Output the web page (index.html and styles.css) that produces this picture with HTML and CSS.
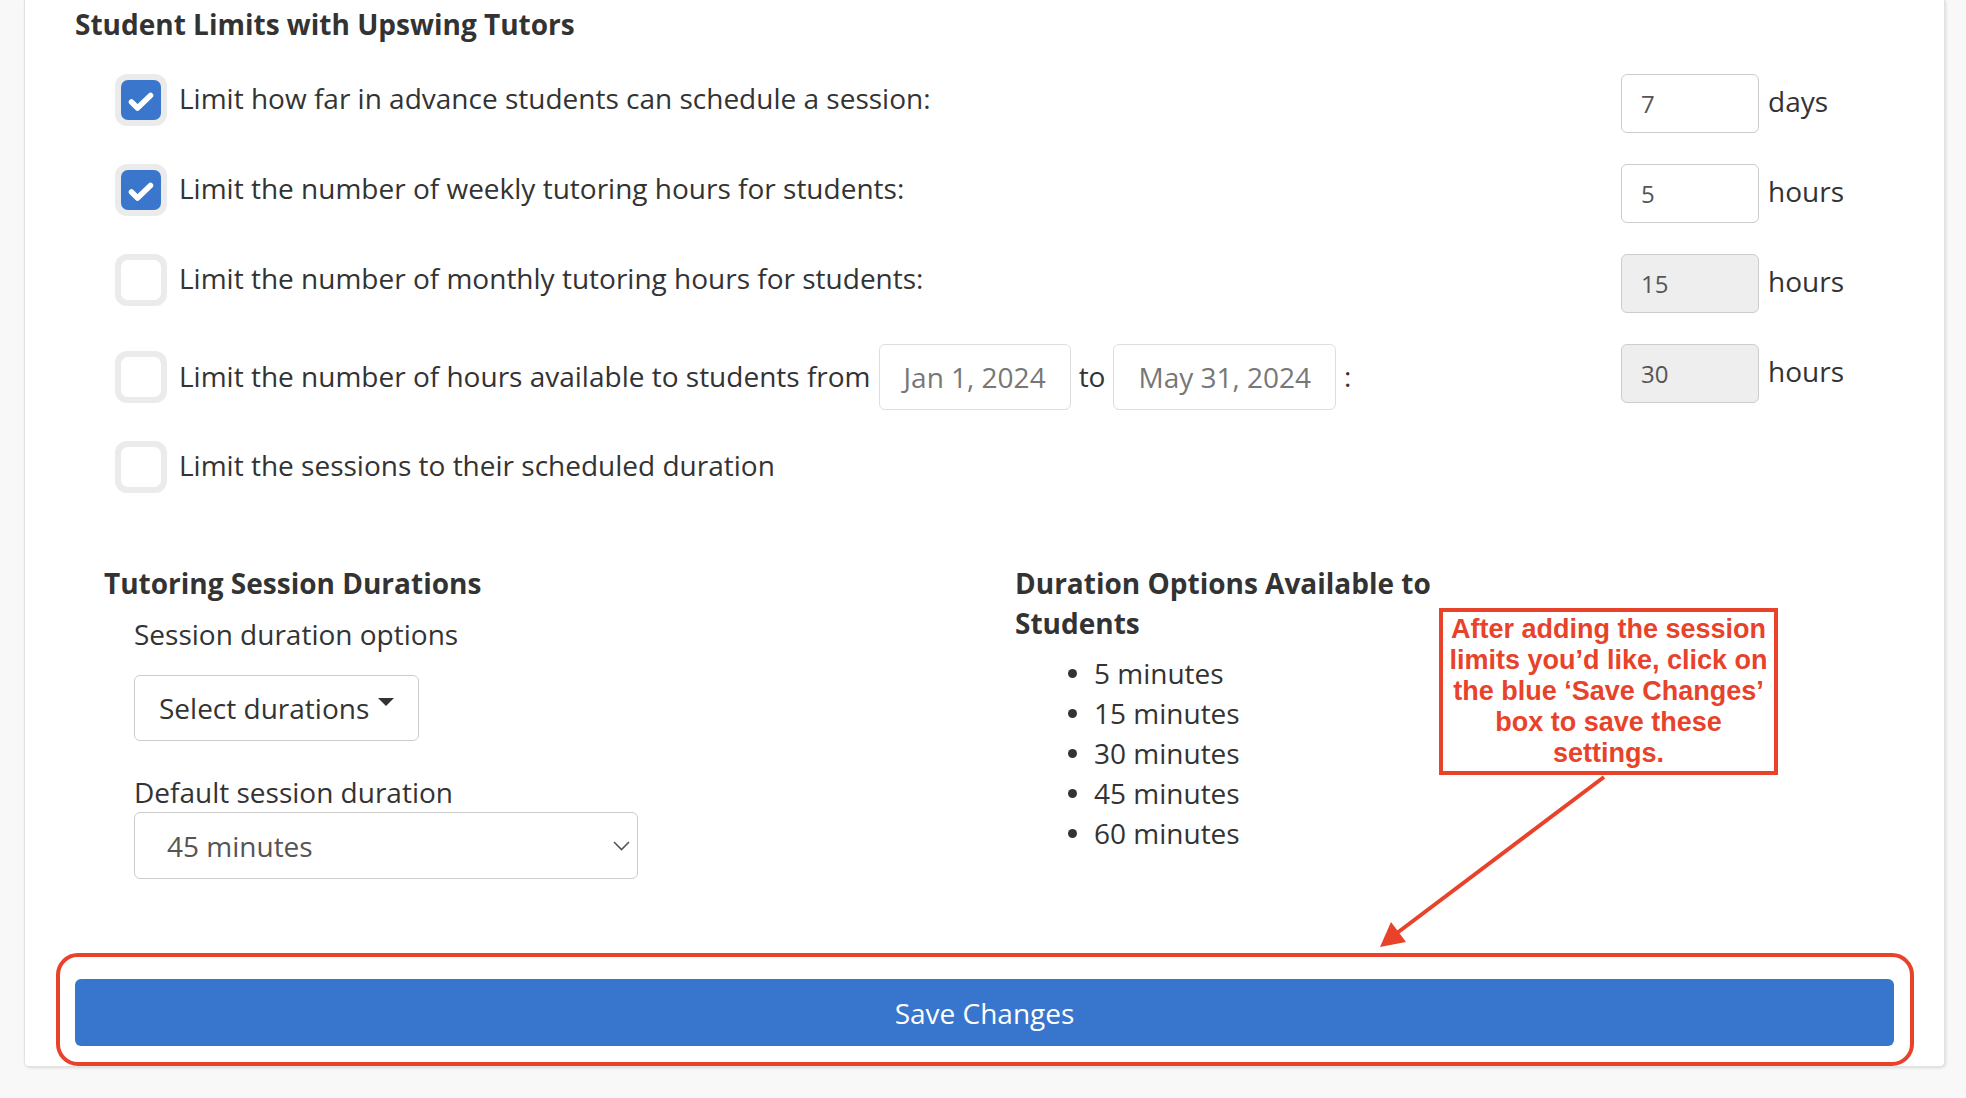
FILE: index.html
```html
<!DOCTYPE html>
<html lang="en">
<head>
<meta charset="utf-8">
<title>Student Limits with Upswing Tutors</title>
<link rel="stylesheet" href="styles.css">
</head>
<body>
<div class="page">
  <div class="card">
    <h2 class="section-title">Student Limits with Upswing Tutors</h2>

    <div class="limits">
      <div class="limit-row">
        <div class="limit-main">
          <span class="check is-checked"><span class="check-box"><svg width="40" height="40" viewBox="0 0 40 40"><path d="M10.5 22 L16.5 28 L29.5 15.5" fill="none" stroke="#fff" stroke-width="5.5" stroke-linecap="round" stroke-linejoin="round"/></svg></span></span>
          <span class="limit-label">Limit how far in advance students can schedule a session:</span>
        </div>
        <div class="limit-value">
          <span class="num-input">7</span><span class="unit">days</span>
        </div>
      </div>

      <div class="limit-row">
        <div class="limit-main">
          <span class="check is-checked"><span class="check-box"><svg width="40" height="40" viewBox="0 0 40 40"><path d="M10.5 22 L16.5 28 L29.5 15.5" fill="none" stroke="#fff" stroke-width="5.5" stroke-linecap="round" stroke-linejoin="round"/></svg></span></span>
          <span class="limit-label">Limit the number of weekly tutoring hours for students:</span>
        </div>
        <div class="limit-value">
          <span class="num-input">5</span><span class="unit">hours</span>
        </div>
      </div>

      <div class="limit-row">
        <div class="limit-main">
          <span class="check"><span class="check-box"></span></span>
          <span class="limit-label">Limit the number of monthly tutoring hours for students:</span>
        </div>
        <div class="limit-value">
          <span class="num-input is-disabled">15</span><span class="unit">hours</span>
        </div>
      </div>

      <div class="limit-row">
        <div class="limit-main">
          <span class="check"><span class="check-box"></span></span>
          <span class="limit-dates">
            <span class="limit-text">Limit the number of hours available to students from</span>
            <span class="date-box">Jan 1, 2024</span>
            <span class="limit-text">to</span>
            <span class="date-box">May 31, 2024</span>
            <span class="limit-text">:</span>
          </span>
        </div>
        <div class="limit-value">
          <span class="num-input is-disabled">30</span><span class="unit">hours</span>
        </div>
      </div>

      <div class="limit-row">
        <div class="limit-main">
          <span class="check"><span class="check-box"></span></span>
          <span class="limit-label">Limit the sessions to their scheduled duration</span>
        </div>
      </div>
    </div>

    <div class="durations">
      <div class="dur-left">
        <h3 class="sub-title">Tutoring Session Durations</h3>
        <div class="field">
          <div class="field-label">Session duration options</div>
          <button class="dropdown" type="button">Select durations<span class="caret"></span></button>
        </div>
        <div class="field field-default">
          <div class="field-label">Default session duration</div>
          <div class="select">
            <span>45 minutes</span>
            <svg class="chevron" width="17" height="10" viewBox="0 0 17 10"><path d="M1 1 L8.5 8.5 L16 1" fill="none" stroke="#555" stroke-width="1.6"/></svg>
          </div>
        </div>
      </div>
      <div class="dur-right">
        <h3 class="sub-title">Duration Options Available to Students</h3>
        <ul class="options">
          <li>5 minutes</li>
          <li>15 minutes</li>
          <li>30 minutes</li>
          <li>45 minutes</li>
          <li>60 minutes</li>
        </ul>
      </div>
    </div>

    <div class="save-wrap">
      <button class="save-btn" type="button">Save Changes</button>
      <span class="callout-ring"></span>
    </div>
  </div>

  <div class="callout-note">After adding the session<br>limits you’d like, click on<br>the blue ‘Save Changes’<br>box to save these<br>settings.</div>
  <svg class="callout-arrow" width="250" height="190" viewBox="0 0 250 190">
    <line x1="234" y1="7" x2="27" y2="163" stroke="#e8432a" stroke-width="4"/>
    <polygon points="10,177 21,152 36,172" fill="#e8432a"/>
  </svg>
</div>
</body>
</html>
```

FILE: styles.css
```css
* { box-sizing: border-box; }

body {
  margin: 0;
  background: #f8f8f8;
  font-family: "Open Sans", "Liberation Sans", sans-serif;
  color: #333;
}

.page {
  position: relative;
  width: 1966px;
  height: 1098px;
  overflow: hidden;
}

.card {
  margin-left: 24px;
  width: 1921px;
  background: #fff;
  border: 1px solid #e2e2e2;
  border-top: 0;
  border-radius: 0 0 5px 5px;
  box-shadow: 1px 1px 3px rgba(0, 0, 0, 0.12);
  padding: 4px 50px 20px;
}

.section-title {
  margin: 0 0 30px;
  font-size: 28px;
  line-height: 40px;
  font-weight: 700;
}

.limits {
  display: flex;
  flex-direction: column;
  gap: 31px;
  margin-left: 40px;
}

.limit-row {
  display: flex;
  align-items: flex-start;
}

.limit-main {
  flex: 1;
  display: flex;
  align-items: center;
  gap: 12px;
  min-height: 52px;
}

.limit-value {
  width: 273px;
  display: flex;
  align-items: center;
  gap: 9px;
}

.check {
  flex: none;
  width: 52px;
  height: 52px;
  padding: 6px;
  background: #ebebeb;
  border-radius: 12px;
}

.check-box {
  display: block;
  width: 40px;
  height: 40px;
  border-radius: 7px;
  background: #fff;
}

.check-box svg { display: block; }

.check.is-checked .check-box { background: #3a76cc; }

.limit-label,
.limit-text {
  font-size: 28px;
  line-height: 40px;
  padding-bottom: 5px;
}

.limit-text { padding-bottom: 3px; }

.limit-dates {
  display: flex;
  align-items: center;
  gap: 8px;
}

.date-box {
  padding: 12px 24px;
  border: 1.5px solid #dedede;
  border-radius: 6px;
  color: #777;
  font-size: 28px;
  line-height: 40px;
}

.num-input {
  width: 138px;
  height: 59px;
  border: 1.5px solid #cccccc;
  border-radius: 6px;
  padding-left: 19px;
  display: flex;
  align-items: center;
  font-size: 24px;
  color: #555;
  background: #fff;
}

.num-input.is-disabled { background: #eeeeee; }

.unit {
  font-size: 28px;
  line-height: 40px;
  padding-bottom: 5px;
}

.durations {
  display: grid;
  grid-template-columns: 911px 440px;
  margin: 70px 0 0 29px;
}

.sub-title {
  margin: 0;
  font-size: 28px;
  line-height: 40px;
  font-weight: 700;
}

.dur-left .sub-title { margin-bottom: 11px; }

.field {
  padding-left: 30px;
  display: flex;
  flex-direction: column;
  align-items: flex-start;
}

.field-label {
  font-size: 28px;
  line-height: 40px;
}

.dropdown {
  margin-top: 21px;
  padding: 12px 24px;
  border: 1px solid #cccccc;
  border-radius: 6px;
  background: #fff;
  color: #333;
  font-family: "Open Sans", "Liberation Sans", sans-serif;
  font-size: 28px;
  line-height: 40px;
}

.caret {
  display: inline-block;
  margin-left: 9px;
  vertical-align: 13px;
  border-top: 8px solid #333;
  border-left: 8px solid transparent;
  border-right: 8px solid transparent;
}

.field-default { margin-top: 31px; }

.select {
  width: 504px;
  height: 67px;
  border: 1.5px solid #cccccc;
  border-radius: 6px;
  display: flex;
  align-items: center;
  justify-content: space-between;
  padding: 0 7px 0 32px;
  font-size: 28px;
  color: #555;
}

.chevron { display: block; }

.options {
  margin: 10px 0 0;
  padding-left: 53px;
  list-style: none;
  font-size: 28px;
  line-height: 40px;
}

.options li {
  display: flex;
  align-items: center;
  gap: 17px;
}

.options li::before {
  content: "";
  flex: none;
  width: 9px;
  height: 9px;
  border-radius: 50%;
  background: #333;
}

.save-wrap {
  position: relative;
  margin-top: 100px;
}

.save-btn {
  display: block;
  width: 100%;
  height: 67px;
  border: 0;
  border-radius: 6px;
  background: #3875cc;
  color: #fff;
  font-family: "Open Sans", "Liberation Sans", sans-serif;
  font-size: 28px;
}

.callout-ring {
  position: absolute;
  top: -26px;
  left: -19px;
  right: -20px;
  bottom: -20px;
  border: 4px solid #e8432a;
  border-radius: 22px;
  pointer-events: none;
}

.callout-note {
  position: absolute;
  left: 1439px;
  top: 608px;
  width: 339px;
  height: 167px;
  border: 4.5px solid #e8432a;
  padding-top: 2px;
  color: #e8432a;
  font-family: "Liberation Sans", Arial, sans-serif;
  font-weight: 700;
  font-size: 27px;
  line-height: 31px;
  text-align: center;
  white-space: nowrap;
}

.callout-arrow {
  position: absolute;
  left: 1370px;
  top: 770px;
}
```
